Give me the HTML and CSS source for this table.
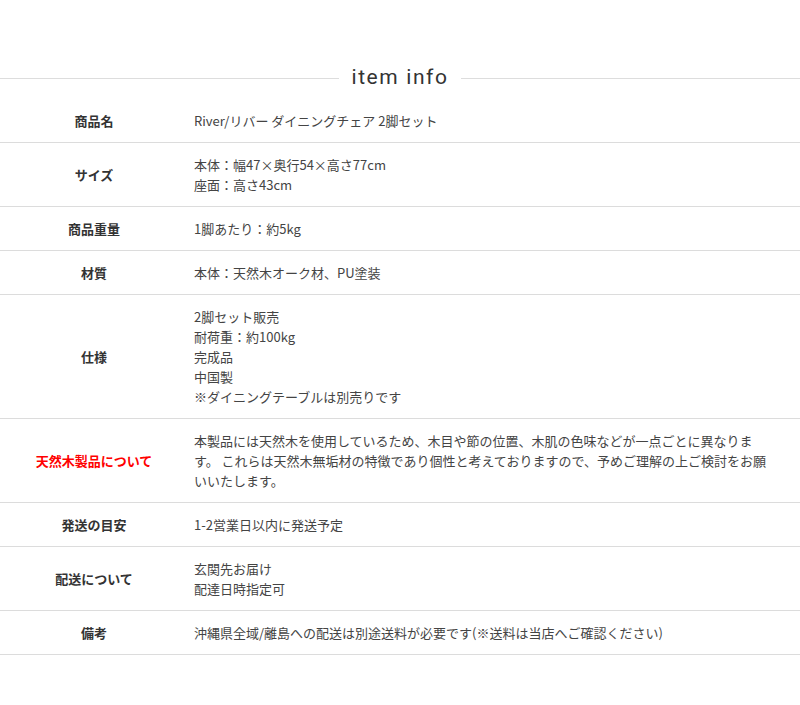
FILE: index.html
```html
<!DOCTYPE html>
<html lang="ja">
<head>
<meta charset="utf-8">
<title>item info</title>
<link rel="stylesheet" href="styles.css">
</head>
<body>
<section class="info">
  <h2 class="info-title"><span>item info</span></h2>
  <table class="spec">
    <tr><th>商品名</th><td>River/リバー ダイニングチェア 2脚セット</td></tr>
    <tr><th>サイズ</th><td>本体：幅47×奥行54×高さ77cm<br>座面：高さ43cm</td></tr>
    <tr><th>商品重量</th><td>1脚あたり：約5kg</td></tr>
    <tr><th>材質</th><td>本体：天然木オーク材、PU塗装</td></tr>
    <tr><th>仕様</th><td>2脚セット販売<br>耐荷重：約100kg<br>完成品<br>中国製<br>※ダイニングテーブルは別売りです</td></tr>
    <tr><th class="warn">天然木製品について</th><td>本製品には天然木を使用しているため、木目や節の位置、木肌の色味などが一点ごとに異なります。 これらは天然木無垢材の特徴であり個性と考えておりますので、予めご理解の上ご検討をお願いいたします。</td></tr>
    <tr><th>発送の目安</th><td>1-2営業日以内に発送予定</td></tr>
    <tr><th>配送について</th><td>玄関先お届け<br>配達日時指定可</td></tr>
    <tr><th>備考</th><td>沖縄県全域/離島への配送は別途送料が必要です(※送料は当店へご確認ください)</td></tr>
  </table>
</section>
</body>
</html>
```

FILE: styles.css
```css
html, body {
  margin: 0;
  padding: 0;
  background: #fff;
}
body {
  font-family: "Noto Sans CJK JP", "Noto Sans", sans-serif;
  color: #444;
}
.info {
  width: 800px;
  padding-top: 62px;
}
.info-title {
  display: flex;
  align-items: center;
  gap: 12px;
  margin: 0 0 7px;
  font-family: Roboto, "Noto Sans", sans-serif;
  font-weight: 400;
  font-size: 21px;
  line-height: 30px;
  letter-spacing: 1.6px;
  color: #333;
}
.info-title::before,
.info-title::after {
  content: "";
  flex: 1;
  height: 1px;
  background: #ddd;
  margin-top: 2px;
}
.spec {
  width: 800px;
  border-collapse: collapse;
  font-size: 13px;
  line-height: 20px;
}
.spec tr {
  border-bottom: 1px solid #dcdcdc;
}
.spec th {
  width: 188px;
  padding: 12px 0 11px;
  text-align: center;
  font-weight: bold;
  color: #333;
  vertical-align: middle;
}
.spec th.warn {
  color: #f00;
}
.spec td {
  padding: 12px 24px 11px 6px;
  text-align: left;
  color: #444;
  vertical-align: middle;
}
```
